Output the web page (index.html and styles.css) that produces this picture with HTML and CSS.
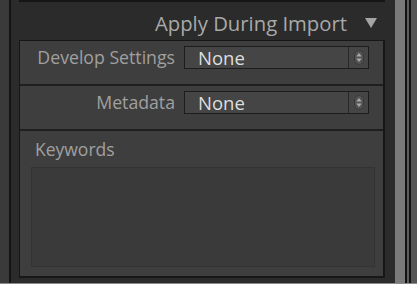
FILE: index.html
```html
<!DOCTYPE html>
<html>
<head>
    <title>Apply During Import</title>
    <link rel="stylesheet" href="styles.css">
</head>
<body>
    <div class="frame">
        <div class="edge-left"></div>
        <div class="rule"></div>
        <div class="main">
            <div class="top-box"></div>
            <div class="header">
                <span class="title">Apply During Import</span>
                <span class="toggle"></span>
            </div>
            <div class="panel">
                <div class="row">
                    <label class="label">Develop Settings</label>
                    <div class="select">
                        <span class="value">None</span>
                        <span class="arrows">
                            <svg width="10" height="15" viewBox="0 0 10 15">
                                <rect x="0.5" y="0.5" width="9" height="14" rx="4.5" fill="#525252" stroke="#3a3a3a"/>
                                <path d="M2.3 6.5 L5 3 L7.7 6.5 Z" fill="#aaa"/>
                                <path d="M2.3 8.5 L5 12 L7.7 8.5 Z" fill="#aaa"/>
                            </svg>
                        </span>
                    </div>
                </div>
                <div class="row">
                    <label class="label">Metadata</label>
                    <div class="select">
                        <span class="value">None</span>
                        <span class="arrows">
                            <svg width="10" height="15" viewBox="0 0 10 15">
                                <rect x="0.5" y="0.5" width="9" height="14" rx="4.5" fill="#525252" stroke="#3a3a3a"/>
                                <path d="M2.3 6.5 L5 3 L7.7 6.5 Z" fill="#aaa"/>
                                <path d="M2.3 8.5 L5 12 L7.7 8.5 Z" fill="#aaa"/>
                            </svg>
                        </span>
                    </div>
                </div>
                <div class="keywords">
                    <div class="kw-label">Keywords</div>
                    <div class="kw-box"></div>
                </div>
            </div>
        </div>
        <div class="scroll"></div>
        <div class="stripe dark"></div>
        <div class="stripe grey"></div>
        <div class="stripe dark"></div>
        <div class="stripe last"></div>
    </div>
    <div class="bottom-line"></div>
</body>
</html>
```

FILE: styles.css
```css
body { margin: 0; background-color: #2b2b2b; font-family: "Open Sans", "Noto Sans", sans-serif; width: 417px; height: 284px; overflow: hidden; }
.frame { display: flex; height: 283px; }
.frame > div { flex-shrink: 0; }
.edge-left { width: 9px; background: #3a3a3a; }
.rule { width: 2px; background: #141414; }
.main { width: 366px; padding: 0 10px 0 8px; background: #2b2b2b; display: flex; flex-direction: column; }
.top-box { height: 0; border-bottom: 2px solid #151515; }
.header { height: 38px; display: flex; align-items: center; justify-content: flex-end; padding-right: 8px; }
.title { color: #a9a9a9; font-size: 20.3px; margin-right: 18px; padding-top: 3px; }
.toggle { width: 0; height: 0; border-left: 6px solid transparent; border-right: 6px solid transparent; border-top: 10px solid #a5a5a5; margin-top: 3px; }
.panel { background: #3e3e3e; border: 1px solid #171717; border-width: 1px 2px 2px 1px; height: 235px; display: flex; flex-direction: column; }
.row { height: 45px; display: flex; align-items: flex-start; border-bottom: 2px solid #1f1f1f; padding-top: 5px; box-sizing: border-box; flex-shrink: 0; }
.label { width: 155px; text-align: right; color: #a0a0a0; font-size: 17.7px; line-height: 23px; margin-right: 9px; }
.select { width: 183px; height: 21px; display: flex; background: #454545; border: 1px solid #1c1c1c; }
.value { flex: 1; color: #dedede; font-size: 18.5px; line-height: 21px; padding-left: 13px; border-right: 1px solid #262626; }
.arrows { width: 19px; display: flex; align-items: center; justify-content: center; background: #464646; }
.arrows svg { display: block; }
.keywords { flex: 1; display: flex; flex-direction: column; padding: 5px 8px 9px 11px; }
.kw-label { color: #a0a0a0; font-size: 17.5px; height: 31px; line-height: 26px; padding-left: 4px; }
.kw-box { flex: 1; background: #3a3a3a; border: 1px solid #333; }
.scroll { width: 10px; background: #7a7a7a; }
.stripe { width: 2px; }
.stripe.dark { background: #121212; }
.stripe.grey { background: #5e5e5e; }
.frame > .stripe.last { flex: 1; flex-shrink: 1; background: #555; }
.bottom-line { height: 1px; background: #8a8a8a; }
```
